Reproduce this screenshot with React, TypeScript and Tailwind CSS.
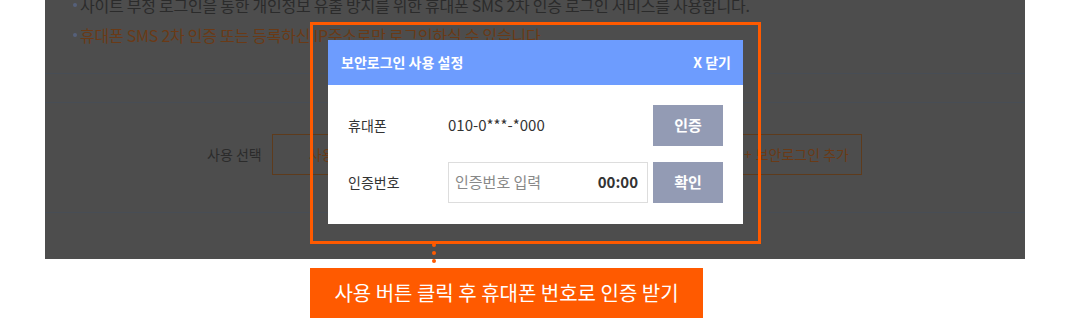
import React from 'react';

const FONT = { fontFamily: '"Noto Sans CJK KR", "Noto Sans", sans-serif' };

const NOTICES = [
  { text: '사이트 부정 로그인을 통한 개인정보 유출 방지를 위한 휴대폰 SMS 2차 인증 로그인 서비스를 사용합니다.', tone: 'text-[#2b2b2b]' },
  { text: '휴대폰 SMS 2차 인증 또는 등록하신 IP주소로만 로그인하실 수 있습니다', tone: 'text-[#6a3a16]' },
];

const SecureLoginModal: React.FC = () => {
  return (
    <div className="w-[415px] bg-white">
      <div className="h-[45px] bg-[#6d9cfe] flex items-center justify-between pl-[13px] pr-[12px] text-white text-[14px] font-bold">
        <span>보안로그인 사용 설정</span>
        <span>X 닫기</span>
      </div>
      <div className="px-[20px] pt-[20px] pb-[21px] flex flex-col gap-[16px] text-[14px] text-[#333]">
        <div className="flex items-center h-[41px]">
          <div className="w-[100px]">휴대폰</div>
          <div className="flex-1 text-[15px]">010-0***-*000</div>
          <button className="w-[70px] h-[41px] bg-[#939bb4] text-white text-[15px] font-bold">인증</button>
        </div>
        <div className="flex items-center h-[41px]">
          <div className="w-[100px]">인증번호</div>
          <div className="flex-1 h-[41px] border border-[#dddddd] flex items-center justify-between pl-[6px] pr-[9px] mr-[5px]">
            <span className="text-[#888] text-[15px]">인증번호 입력</span>
            <span className="font-bold text-[15px] text-[#333]">00:00</span>
          </div>
          <button className="w-[70px] h-[41px] bg-[#939bb4] text-white text-[15px] font-bold">확인</button>
        </div>
      </div>
    </div>
  );
};

export default function App() {
  return (
    <div className="w-[1070px] h-[318px] bg-white overflow-hidden" style={FONT}>
      <div className="relative flow-root ml-[45px] w-[980px] h-[259px] bg-[#4d4d4d]">
        {/* dimmed page behind the popup */}
        <ul className="-mt-[10px] text-[16px] tracking-[-0.25px]">
          {NOTICES.map((n) => (
            <li key={n.text} className={`flex items-center h-[30px] pl-[28px] ${n.tone}`}>
              <span className="w-[4px] h-[4px] rounded-full bg-[#55607a] mr-[3px]" />
              {n.text}
            </li>
          ))}
        </ul>
        <div className="mt-[23px] h-[29px] border-t border-[#474d55]" />
        <div className="h-[111px] border-t border-b border-[#474d55] flex items-start pt-[31px] pl-[162px] pr-[163px] text-[14px]">
          <div className="h-[41px] flex items-center text-[#2b2b2b] mr-[10px]">사용 선택</div>
          <div className="w-[100px] h-[41px] border border-[#5e3b1c] flex items-center justify-center text-[#6a3a16]">사용</div>
          <div className="w-[100px] h-[41px] ml-[6px] border border-[#5e3b1c] flex items-center justify-center text-[#6a3a16]">사용안함</div>
          <div className="ml-auto h-[41px] px-[12px] border border-[#5e3b1c] flex items-center gap-[4px] text-[#6a3a16]">
            <span>+</span>
            <span>보안로그인 추가</span>
          </div>
        </div>

        {/* highlighted popup with callout */}
        <div className="absolute left-[265px] top-[22px] flex flex-col">
          <div className="w-[451px] h-[222px] border-[3px] border-[#ff5a00] p-[15px]">
            <SecureLoginModal />
          </div>
          <div className="ml-[122px] -mt-[1px] flex flex-col gap-[4px]">
            <span className="w-[4px] h-[4px] rounded-full bg-[#ff5a00]" />
            <span className="w-[4px] h-[4px] rounded-full bg-[#ff5a00]" />
            <span className="w-[4px] h-[4px] rounded-full bg-[#ff5a00]" />
          </div>
          <div className="mt-[5px] w-[393px] h-[50px] bg-[#ff5a00] flex items-center justify-center text-white text-[20px]">
            사용 버튼 클릭 후 휴대폰 번호로 인증 받기
          </div>
        </div>
      </div>
    </div>
  );
}
